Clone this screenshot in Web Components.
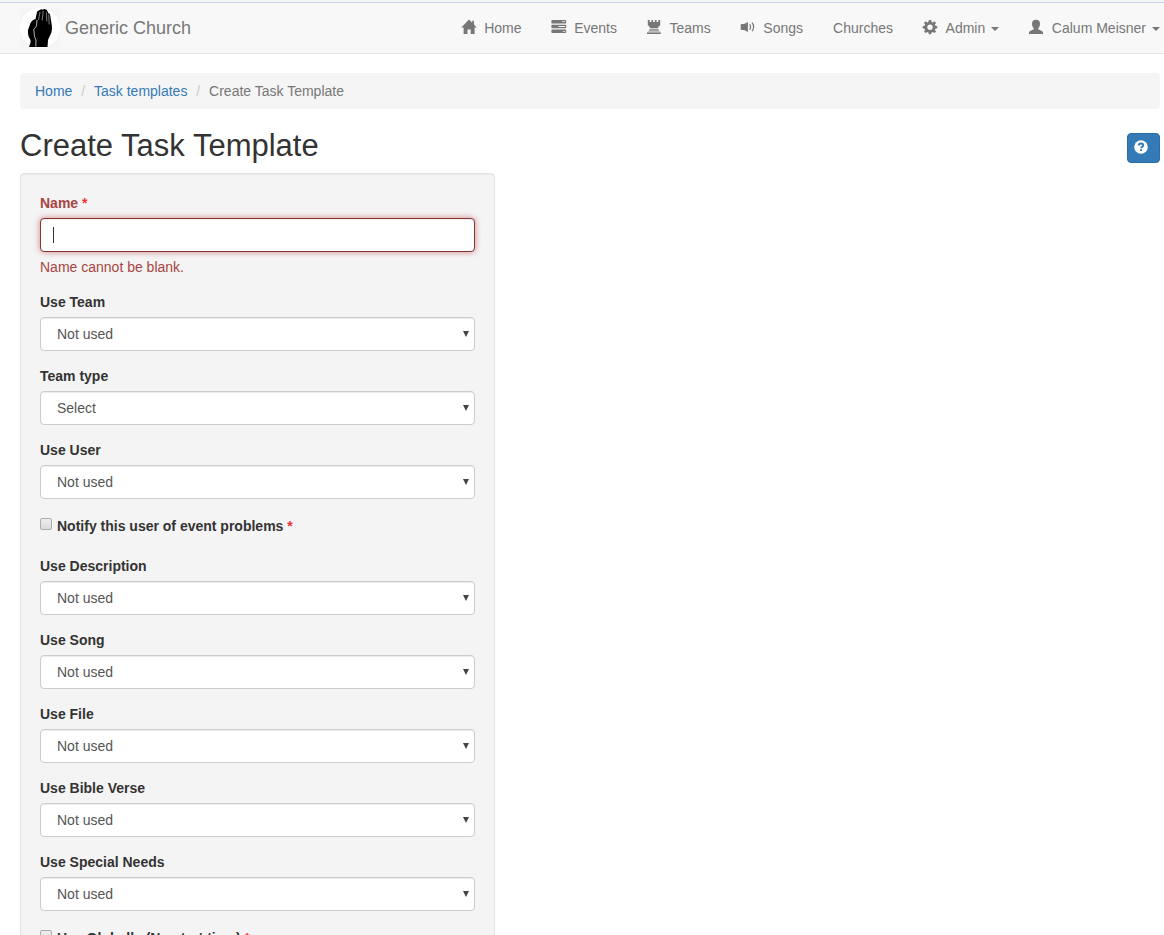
<!DOCTYPE html>
<html lang="en">
<head>
<meta charset="utf-8">
<title>Create Task Template</title>
<style>
html,body{margin:0;height:935px;overflow:hidden;background:#fff}
body{font:14px/20px "Liberation Sans",Arial,sans-serif;color:#333}
</style>
</head>
<body>
<app-page></app-page>
<script>
function define(name, render) {
  customElements.define(name, class extends HTMLElement {
    constructor() {
      super();
      this.attachShadow({mode: 'open'});
    }
    connectedCallback() {
      const t = document.createElement('template');
      t.innerHTML = render(this);
      this.shadowRoot.replaceChildren(t.content.cloneNode(true));
    }
  });
}

const icons = {
  home: '<path d="M8 .4 11.200 3.700V1.800H13V5.500L15.700 8.600H13.600V15H9.700V10.500H6.500V15H2.600V8.600H.3z"/>',
  tasks: '<path fill-rule="evenodd" d="M1.200 1h13.200q.8 0 .8.800v1.900q0 .8-.8.800H1.200q-.8 0-.8-.800V1.800Q.4 1 1.200 1zM11.200 2.300v.8h2.900v-.8zM1.200 5.800h13.200q.8 0 .8.800v1.900q0 .8-.8.800H1.200q-.8 0-.8-.800V6.600q0-.8.800-.8zM7.500 7.100v.8h6.600v-.8zM1.200 10.600h13.200q.8 0 .8.800v1.900q0 .8-.8.800H1.200q-.8 0-.8-.800v-1.900q0-.8.800-.8zM11.800 11.900v.8h2.300v-.8z"/>',
  tower: '<path d="M1.800 1h1.900v2h1.700V1h1.700v2h1.800V1h1.700v2h1.700V1h1.900v5.300l-2 1.700v1.300H3.800V8l-2-1.700z"/><path d="M3.600 10.300h8.800l.6 1.200H3z"/><path opacity=".45" d="M3 11.500h10l1.600 2.100H1.200z"/><path d="M1 13.500h13.800V15H1z"/>',
  volume: '<path d="M.7 5.700q0-.6.700-.6h2.700L7.900 3v10L4.100 10.900H1.400q-.7 0-.7-.6z"/><path fill="none" stroke="currentColor" stroke-width="1.200" d="M9.700 5.300q1.700 2.600 0 5.400M12 3.700q3.300 4.200 0 8.500"/>',
  cog: '<path fill-rule="evenodd" d="M6.900 1h2.200l.5 1.900 1.100.5L12.500 2.300 14 3.900 12.900 5.600l.5 1.100 1.900.5v2.100l-1.900.5-.5 1.100 1.100 1.700-1.500 1.500-1.800-1.100-1.100.5L9.100 15.300H6.900l-.5-1.800-1.100-.5-1.800 1.100L2 12.600l1.100-1.700-.5-1.100L.7 9.300V7.200l1.900-.5.500-1.100L2 3.900 3.500 2.300l1.800 1.100 1.100-.5zM8 5.500A2.700 2.700 0 1 0 8 10.900 2.700 2.700 0 0 0 8 5.500z"/>',
  user: '<path d="M8 .8c2.600 0 4 1.400 4 4 0 2-.6 3.400-1.700 4.400v1.100c.4.700 4.200 1.400 4.700 3V15H1V13.300c.5-1.600 4.300-2.300 4.700-3V9.200C4.600 8.200 4 6.800 4 4.800c0-2.600 1.400-4 4-4z"/>'
};

define('nav-item', el => {
  const icon = el.getAttribute('icon');
  return `<style>
  :host{display:flex;align-items:center;white-space:nowrap;color:#777;line-height:20px}
  svg{width:16px;height:16px;fill:currentColor;margin:0 7.6px 2px -1px}
  i{border:4px solid transparent;border-top-color:currentColor;border-bottom:0;margin:2px 0 0 6px}
  </style>${icon ? `<svg viewBox="0 0 16 16">${icons[icon]}</svg>` : ''}<span><slot></slot></span>${el.hasAttribute('menu') ? '<i></i>' : ''}`;
});

define('church-logo', () => `<style>:host,svg{display:block;width:40px;height:40px}</style>
<svg viewBox="0 0 40 40"><path fill="#f5f5f5" d="M0 0h40v40H0z"/><circle cx="20" cy="20" r="20" fill="#fff"/>
<path d="M9 39q2-4 1.600-7Q7.500 28 8 22L10.500 15q2-3.500 5-3.700L17 4q.7-1.800 2-1.500l1-.8q1.500-.8 2.500.1Q24.500.2 25.800 1.500q1.200-.3 1.700 1.700l.7 2q1.800-.4 2 2l1.600 10q.6 4-.4 7.300L28 32l-.5 7z"/>
<path fill="none" stroke="#fff" stroke-width=".7" d="M17 12l-.5 6-2.700 3.500.7 7 1.500 3.500-.2 6.500"/>
<path fill="none" stroke="#aaa" stroke-width=".75" d="M20 4l-1.500 8M23.200 3l-1 9.500M26.500 4.500l.3 9M28.700 6.500l.5 10"/></svg>`);

define('site-navbar', () => `<style>
:host{display:block;box-sizing:border-box;height:54px;background:#f8f8f8;border-bottom:1px solid #e7e7e7}
.edge{height:2px;background:#f5f6f8;border-bottom:1px solid #ccd5ea}
.bar{height:50px;display:flex;align-items:center;justify-content:space-between;padding:0 4px 0 20px}
.brand{display:flex;align-items:center;gap:5px;font-size:18px;color:#777}
nav{display:flex;gap:30px}
</style><div class="edge"></div><div class="bar"><div class="brand"><church-logo></church-logo><span>Generic Church</span></div>
<nav><nav-item icon="home">Home</nav-item><nav-item icon="tasks">Events</nav-item><nav-item icon="tower">Teams</nav-item><nav-item icon="volume">Songs</nav-item><nav-item>Churches</nav-item><nav-item icon="cog" menu>Admin</nav-item><nav-item icon="user" menu>Calum Meisner</nav-item></nav></div>`);

define('bread-crumbs', () => `<style>
:host{display:flex;background:#f5f5f5;border-radius:4px;padding:8px 15px;color:#777}
a{color:#337ab7}i{font-style:normal;color:#ccc;padding:0 8.9px}
</style><a>Home</a><i>/</i><a>Task templates</a><i>/</i><span>Create Task Template</span>`);

define('help-button', () => `<style>
:host{display:flex;box-sizing:border-box;width:33px;height:30px;background:#337ab7;border:1px solid #2e6da4;border-radius:4px;align-items:center;padding:0 0 2px 6px}
svg{width:14px;height:14px}
</style><svg viewBox="0 0 14 14"><circle cx="7" cy="7" r="6.800" fill="#fff"/><path fill="none" stroke="#337ab7" stroke-width="1.900" d="M4.700 5.500Q4.800 3.500 7 3.500q2.200 0 2.200 1.700 0 1-1.200 1.700-.9.500-.9 1.400"/><path fill="#337ab7" d="M6.100 9.200H8v1.900H6.100z"/></svg>`);

define('text-field', el => `<style>
:host{display:block;margin-bottom:15px;color:#a94442}
label{display:block;font-weight:700;margin-bottom:5px}
b{color:#e33}
.box{box-sizing:border-box;height:34px;background:#fff;border:1px solid #843534;border-radius:4px;box-shadow:inset 0 1px 1px rgba(0,0,0,.075),0 0 6px #ce8483;padding:8px 12px}
.caret{width:1px;height:16px;background:#333}
p{margin:5px 0 0}
</style><label>${el.getAttribute('label')} <b>*</b></label><div class="box" role="textbox"><div class="caret"></div></div><p><slot></slot></p>`);

define('select-field', el => `<style>
:host{display:block;margin-bottom:15px}
label{display:block;font-weight:700;margin-bottom:5px}
.box{box-sizing:border-box;height:34px;display:flex;align-items:center;justify-content:space-between;background:#fff;border:1px solid #ccc;border-radius:4px;box-shadow:inset 0 1px 1px rgba(0,0,0,.075);padding:0 5px 0 16px;color:#555}
svg{width:6px;height:6px;fill:#444;margin-bottom:1px}
</style><label>${el.getAttribute('label')}</label><div class="box" role="combobox"><slot></slot><svg viewBox="0 0 6 6"><path d="M0 0h6L3 6z"/></svg></div>`);

define('check-field', () => `<style>
:host{display:flex;height:25px;padding-top:2px;margin-bottom:15px;font-weight:700}
i{box-sizing:border-box;width:12px;height:12px;margin:2px 5px 0 0;border:1px solid #acacac;border-radius:2px;background:linear-gradient(#ededed,#dcdcdc)}
b{color:#e33}
</style><i role="checkbox"></i><span><slot></slot> <b>*</b></span>`);

define('form-well', () => `<style>
:host{display:block;box-sizing:border-box;width:475px;min-height:850px;padding:19px;background:#f4f4f4;border:1px solid #e3e3e3;border-radius:4px;box-shadow:inset 0 1px 1px rgba(0,0,0,.05)}
</style><slot></slot>`);

define('app-page', () => `<style>
:host{display:block;height:935px;overflow:hidden}
main{padding:19px 4px 0 20px}
header{display:flex;justify-content:space-between;height:64px}
h1{font-weight:500;font-size:31px;line-height:35px;margin:19px 0 0}
help-button{margin-top:24px}
</style><site-navbar></site-navbar><main><bread-crumbs></bread-crumbs>
<header><h1>Create Task Template</h1><help-button></help-button></header>
<form-well>
<text-field label="Name">Name cannot be blank.</text-field>
<select-field label="Use Team">Not used</select-field>
<select-field label="Team type">Select</select-field>
<select-field label="Use User">Not used</select-field>
<check-field>Notify this user of event problems</check-field>
<select-field label="Use Description">Not used</select-field>
<select-field label="Use Song">Not used</select-field>
<select-field label="Use File">Not used</select-field>
<select-field label="Use Bible Verse">Not used</select-field>
<select-field label="Use Special Needs">Not used</select-field>
<check-field>Use Globally (No start time)</check-field>
</form-well></main>`);
</script>
</body>
</html>
